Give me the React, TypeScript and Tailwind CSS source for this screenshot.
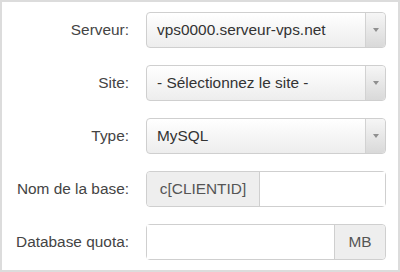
import React from 'react';

const font = { fontFamily: '"Liberation Sans", Arial, sans-serif' };

const Select = ({ value }: { value: string }) => (
  <div className="flex h-[36px] w-[240px] rounded-[4px] border border-[#cfcfcf] bg-gradient-to-b from-white to-[#ededed] text-[15.4px] text-[#333]">
    <div className="flex flex-1 items-center pl-[10px]">{value}</div>
    <div className="flex w-[20px] items-center justify-center rounded-r-[4px] border-l border-[#d2d2d2] bg-gradient-to-b from-[#f6f6f6] to-[#d9d9d9]">
      <svg width="6" height="4" viewBox="0 0 6 4">
        <polygon points="0,0 6,0 3,4" fill="#8f8f8f" />
      </svg>
    </div>
  </div>
);

const Row = ({ label, children }: { label: string; children: React.ReactNode }) => (
  <div className="flex items-center">
    <div className="w-[127px] text-right text-[15.4px] text-[#444]">{label}</div>
    <div className="ml-[17px]">{children}</div>
  </div>
);

export default function App() {
  return (
    <div style={font} className="h-[272px] w-[400px] border-2 border-[#dcdcdc] bg-white">
      <div className="flex flex-col gap-[17px] pt-[10px]">
        <Row label="Serveur:">
          <Select value="vps0000.serveur-vps.net" />
        </Row>
        <Row label="Site:">
          <Select value="- Sélectionnez le site -" />
        </Row>
        <Row label="Type:">
          <Select value="MySQL" />
        </Row>
        <Row label="Nom de la base:">
          <div className="flex h-[36px] w-[240px] rounded-[4px] border border-[#cfcfcf] text-[15.4px]">
            <div className="flex w-[113px] items-center justify-center rounded-l-[4px] border-r border-[#cfcfcf] bg-[#eeeeee] text-[#555]">c[CLIENTID]</div>
            <div className="flex-1 bg-white" />
          </div>
        </Row>
        <Row label="Database quota:">
          <div className="flex h-[36px] w-[240px] rounded-[4px] border border-[#cfcfcf] text-[15.4px]">
            <div className="flex-1 bg-white" />
            <div className="flex w-[51px] items-center justify-center rounded-r-[4px] border-l border-[#cfcfcf] bg-[#eeeeee] text-[#555]">MB</div>
          </div>
        </Row>
      </div>
    </div>
  );
}
